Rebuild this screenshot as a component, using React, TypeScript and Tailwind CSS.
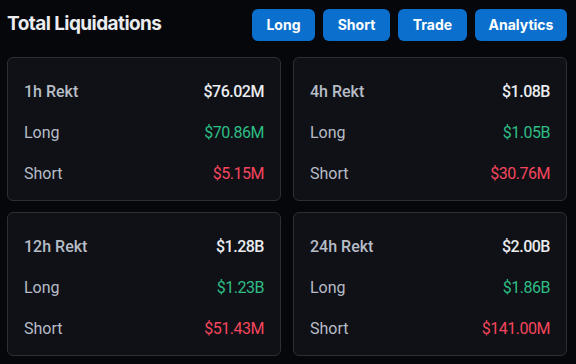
const stats = [
  { period: "1h", total: "$76.02M", long: "$70.86M", short: "$5.15M" },
  { period: "4h", total: "$1.08B", long: "$1.05B", short: "$30.76M" },
  { period: "12h", total: "$1.28B", long: "$1.23B", short: "$51.43M" },
  { period: "24h", total: "$2.00B", long: "$1.86B", short: "$141.00M" },
];

const buttons = [
  { label: "Long", width: "w-[63px]" },
  { label: "Short", width: "w-[67px]" },
  { label: "Trade", width: "w-[69px]" },
  { label: "Analytics", width: "w-[92px]" },
];

const StatCard = ({ period, total, long, short }: (typeof stats)[number]) => (
  <div className="flex h-[144px] flex-col rounded-md border border-[#2b2f36] bg-[#0f1117] pl-[16px] pr-[16px] pt-[13px]">
    <div className="flex h-[41px] items-center justify-between">
      <span className="font-medium text-[#b7bdc6]">{period} Rekt</span>
      <span className="font-medium tracking-[-0.03em] text-[#eaecef]">{total}</span>
    </div>
    <div className="flex h-[41px] items-center justify-between">
      <span className="text-[#b7bdc6]">Long</span>
      <span className="tracking-[-0.03em] text-[#2ebd85]">{long}</span>
    </div>
    <div className="flex h-[41px] items-center justify-between">
      <span className="text-[#b7bdc6]">Short</span>
      <span className="tracking-[-0.03em] text-[#f6465d]">{short}</span>
    </div>
  </div>
);

export default function App() {
  return (
    <div
      className="h-[364px] w-[576px] bg-[#06070b] pl-[7px] pr-[9px] text-[16px]"
      style={{ fontFamily: "Roboto, 'Noto Sans', sans-serif" }}
    >
      <div className="flex h-[50px] items-center justify-between pb-[1px]">
        <h1
          className="text-[19px] font-bold tracking-[-0.03em] text-[#eaecef]"
          style={{ fontFamily: "Inter, sans-serif" }}
        >
          Total Liquidations
        </h1>
        <div className="flex gap-[8px]">
          {buttons.map((b) => (
            <button
              key={b.label}
              className={`${b.width} h-[32px] rounded-md bg-[#0b6fcd] text-[14px] font-bold text-white`}
              style={{ fontFamily: "Inter, sans-serif" }}
            >
              {b.label}
            </button>
          ))}
        </div>
      </div>
      <div className="mt-[7px] grid grid-cols-2 gap-x-[12px] gap-y-[11px]">
        {stats.map((s) => (
          <StatCard key={s.period} {...s} />
        ))}
      </div>
    </div>
  );
}
